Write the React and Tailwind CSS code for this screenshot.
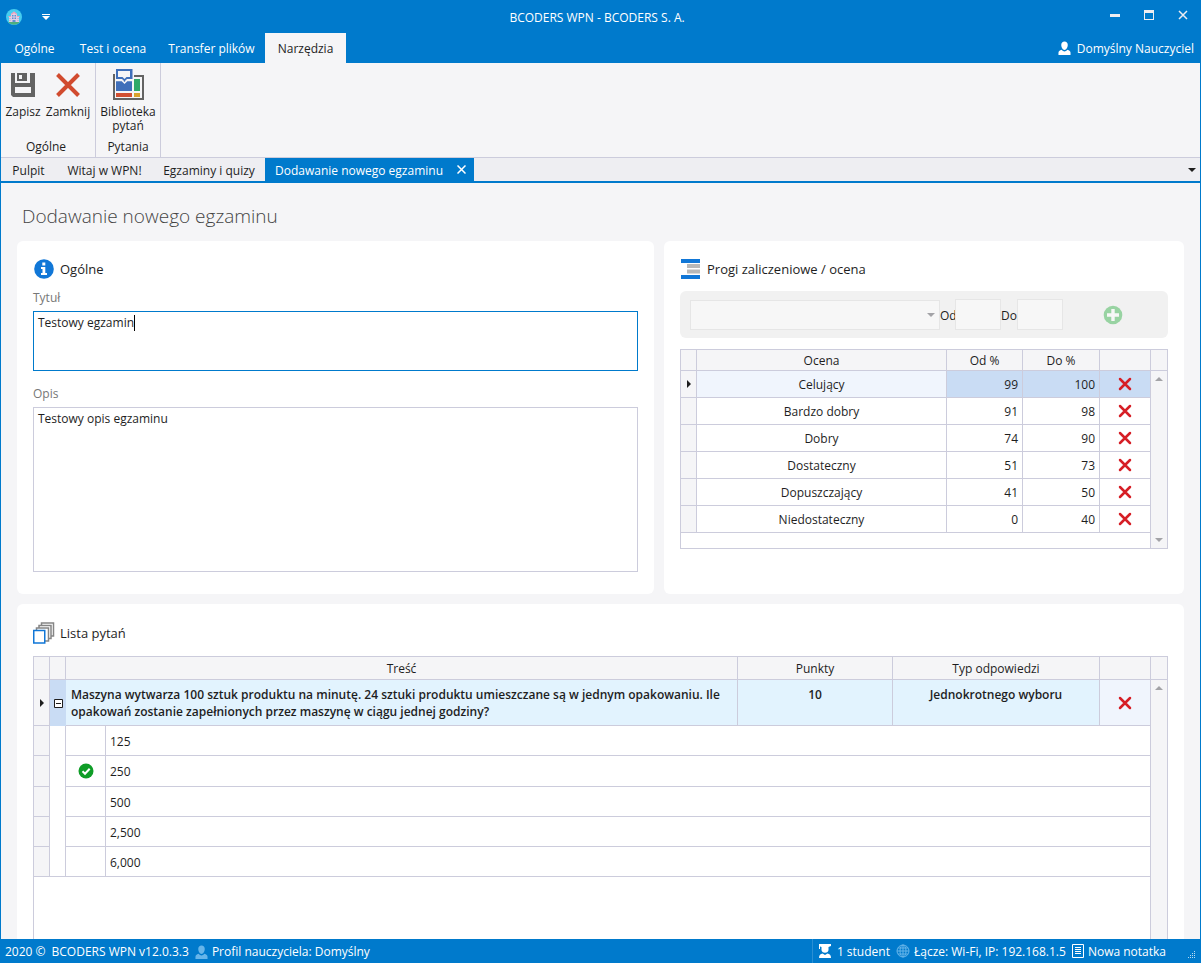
import React from "react";
import { useState } from "react";

const grades = [
  { name: "Celujący", from: 99, to: 100 },
  { name: "Bardzo dobry", from: 91, to: 98 },
  { name: "Dobry", from: 74, to: 90 },
  { name: "Dostateczny", from: 51, to: 73 },
  { name: "Dopuszczający", from: 41, to: 50 },
  { name: "Niedostateczny", from: 0, to: 40 },
];

const answers = [
  { text: "125", correct: false, height: "h-[30px]" },
  { text: "250", correct: true, height: "h-[31px]" },
  { text: "500", correct: false, height: "h-[30px]" },
  { text: "2,500", correct: false, height: "h-[30px]" },
  { text: "6,000", correct: false, height: "h-[30px]" },
];

function LogoIcon() {
  return (
    <svg width="16" height="16" viewBox="0 0 16 16">
      <circle cx="8" cy="8" r="8" fill="#45cdf0" />
      <path d="M2 13h12a8 8 0 0 1-12 0z" fill="#4fae7c" />
      <path d="M3 13V7.500h2V5l3-2.500L11 5v2.500h2V13z" fill="#dfcfe6" />
      <path d="M4.500 5.500L8 2.500l3.500 3h-1.500L8 4 6 5.500z" fill="#f29bb2" />
      <path d="M2.500 7h2.500v1H2.500zM11 7h2.500v1H11z" fill="#f29bb2" />
      <path d="M6 6h1.500v1.500H6zM8.500 6H10v1.500H8.500zM6 8.500h1.500V10H6zM8.500 8.500H10V10H8.500zM6.500 11h3v2h-3z" fill="#5f8fd0" />
      <path d="M3.500 9h1v1h-1zM11.500 9h1v1h-1zM3.500 11h1v1h-1zM11.500 11h1v1h-1z" fill="#9aa6cf" />
    </svg>
  );
}

function SaveIcon() {
  return (
    <svg width="32" height="32" viewBox="0 0 32 32">
      <path d="M4 4v22l2 2h22V4h-5v10H8V4z M8 18h16v6H8z" fill="#636363" fillRule="evenodd" />
      <path d="M10 4h10v8H10z M12 6v4h3V6z" fill="#636363" fillRule="evenodd" />
    </svg>
  );
}

function CloseIcon() {
  return (
    <svg width="32" height="32" viewBox="0 0 32 32">
      <path d="M5.500 5.500l21 21M26.500 5.500l-21 21" stroke="#d14b2f" strokeWidth="4" fill="none" />
    </svg>
  );
}

function LibraryIcon() {
  return (
    <svg width="32" height="32" viewBox="0 0 32 32">
      <path d="M3 6H2v24h29V7h-9" fill="none" stroke="#636363" strokeWidth="2" />
      <path d="M4 12h16v10H4z" fill="#3f6fba" />
      <path d="M4 24h16v4H4z" fill="#d14f32" />
      <path d="M22 10h6v12h-6z" fill="#2fa968" />
      <path d="M22 24h6v4h-6z" fill="#d9a22d" />
      <path d="M4 0h16.500v10H15l-2.500 2.500L10 10H4z" fill="#3f6fba" />
      <path d="M6 2h12v6h-3.500l-2 2-2-2H6z" fill="#f5f5f7" />
      <path d="M4 11.500h6l2.500 2.500 2.500-2.500h5" fill="none" stroke="#f5f5f7" strokeWidth="1.500" />
    </svg>
  );
}

function UserIcon({ color }) {
  return (
    <svg width="13" height="15" viewBox="0 0 14 15" fill={color}>
      <path d="M7 0c2.200 0 3.500 1.600 3.500 3.800C10.500 6.200 9 9 7 9S3.500 6.200 3.500 3.800C3.500 1.600 4.800 0 7 0z" />
      <path d="M4 8.800C4.800 10 6 10.600 7 10.600s2.200-.6 3-1.800c2.300.6 3.500 1.600 3.500 3.200v2.500H.5V12c0-1.600 1.200-2.600 3.500-3.200z" />
    </svg>
  );
}

function InfoIcon() {
  return (
    <svg width="20" height="20" viewBox="0 0 20 20">
      <circle cx="10" cy="10" r="9.800" fill="#1177d7" />
      <path d="M8.300 3.500h3v3h-3zM7 8h4.300v6H13v2H7v-2h1.500v-4H7z" fill="#fff" />
    </svg>
  );
}

function LinesIcon() {
  return (
    <svg width="20" height="22" viewBox="0 0 20 22">
      <path d="M0 1h19v4H0zM0 17h19v4H0z" fill="#1177d7" />
      <path d="M6 6h13v4H6zM6 11.500h13v4H6z" fill="#b8b8b8" />
    </svg>
  );
}

function StackIcon() {
  return (
    <svg width="22" height="22" viewBox="0 0 22 22" fill="#fff">
      <path d="M8.500 1h12v13h-12z" stroke="#858585" strokeWidth="1.500" />
      <path d="M6 3.500h12v13H6z" stroke="#858585" strokeWidth="1.500" />
      <path d="M3.500 6h12v13h-12z" stroke="#858585" strokeWidth="1.500" />
      <path d="M.75 8.500h11v12.500h-11z" stroke="#1177d7" strokeWidth="1.500" />
    </svg>
  );
}

function DeleteIcon() {
  return (
    <svg width="14" height="14" viewBox="0 0 14 14" className="block">
      <path d="M2 2l10 10M12 2L2 12" stroke="#d61f26" strokeWidth="2.500" strokeLinecap="round" />
    </svg>
  );
}

function DeleteButton({ label }) {
  return (
    <button type="button" aria-label={label} className="block mx-auto">
      <DeleteIcon />
    </button>
  );
}

function Arrow({ up }) {
  return (
    <svg width="8" height="4" viewBox="0 0 8 4" fill="#a3a3a7">
      <path d={up ? "M0 4l4-4 4 4z" : "M0 0l4 4 4-4z"} />
    </svg>
  );
}

function RowMarker() {
  return (
    <svg width="4" height="8" viewBox="0 0 4 8" className="block mx-auto" fill="#1e1e1e">
      <path d="M0 0l4 4-4 4z" />
    </svg>
  );
}

function TitleBar() {
  return (
    <header className="h-[33px] shrink-0 flex items-center bg-[#007acc] text-white">
      <div className="flex-1 flex items-center gap-[19px] pl-[5px]">
        <LogoIcon />
        <button type="button" aria-label="Dostosuj pasek">
          <svg width="10" height="6" viewBox="0 0 10 6" fill="#fff" className="block">
            <path d="M1 0h8v1H1zM1 2h8L5 6z" />
          </svg>
        </button>
      </div>
      <h1 className="pt-0.5">BCODERS WPN - BCODERS S. A.</h1>
      <div className="flex-1 flex items-center justify-end gap-6 pr-3 pb-1">
        <button type="button" aria-label="Minimalizuj">
          <svg width="10" height="10" viewBox="0 0 10 10" className="block">
            <path d="M0 4h10v3H0z" fill="#ededf1" />
          </svg>
        </button>
        <button type="button" aria-label="Maksymalizuj">
          <svg width="10" height="10" viewBox="0 0 10 10" className="block">
            <path d="M0 0h10v10H0zM1 3v6h8V3z" fill="#ededf1" fillRule="evenodd" />
          </svg>
        </button>
        <button type="button" aria-label="Zamknij okno">
          <svg width="10" height="10" viewBox="0 0 10 10" className="block">
            <path d="M1 1l8 8M9 1L1 9" stroke="#ededf1" strokeWidth="1.500" />
          </svg>
        </button>
      </div>
    </header>
  );
}

function MenuBar() {
  return (
    <nav className="h-[30px] shrink-0 flex bg-[#007acc] text-white">
      <button type="button" className="w-[67px] pt-0.5">Ogólne</button>
      <button type="button" className="w-[90px] pt-0.5">Test i ocena</button>
      <button type="button" className="w-[107px] pt-0.5">Transfer plików</button>
      <button type="button" className="w-[81px] pt-0.5 bg-[#f5f5f7] text-[#1e1e1e]">Narzędzia</button>
      <button type="button" className="ml-auto flex items-center gap-1.5 pr-1.5">
        <UserIcon color="#fff" />
        <span className="pt-0.5">Domyślny Nauczyciel</span>
      </button>
    </nav>
  );
}

function Ribbon() {
  return (
    <div className="h-[95px] shrink-0 flex border-b border-[#ccccdc] leading-[14px]">
      <div className="flex flex-col justify-between items-center w-[95px] pr-1 pt-1.5 pb-[3px] border-r border-[#ccccdc]">
        <div className="flex">
          <button type="button" className="w-11 flex flex-col items-center gap-1">
            <SaveIcon />
            Zapisz
          </button>
          <button type="button" className="w-[46px] flex flex-col items-center gap-1">
            <CloseIcon />
            Zamknij
          </button>
        </div>
        <span>Ogólne</span>
      </div>
      <div className="flex flex-col justify-between items-center w-[65px] pt-1.5 pb-[3px] border-r border-[#ccccdc]">
        <button type="button" className="flex flex-col items-center gap-1">
          <LibraryIcon />
          <span>Biblioteka<br />pytań</span>
        </button>
        <span>Pytania</span>
      </div>
    </div>
  );
}

function DocumentTabs() {
  return (
    <div className="h-[25px] shrink-0 flex items-stretch bg-[#eeeef2] border-b-2 border-[#007acc]">
      <button type="button" className="w-[55px] pt-0.5">Pulpit</button>
      <button type="button" className="w-[97px] pt-0.5">Witaj w WPN!</button>
      <button type="button" className="w-28 pt-0.5">Egzaminy i quizy</button>
      <div className="flex items-center justify-between w-[209px] pl-2.5 pr-2 bg-[#007acc] text-white">
        <button type="button" className="pt-0.5">Dodawanie nowego egzaminu</button>
        <button type="button" aria-label="Zamknij kartę">
          <svg width="9" height="9" viewBox="0 0 9 9" className="block">
            <path d="M.5 .5l8 8M8.500 .5l-8 8" stroke="#fff" strokeWidth="1.500" />
          </svg>
        </button>
      </div>
      <button type="button" aria-label="Lista kart" className="ml-auto pr-1">
        <svg width="8" height="4" viewBox="0 0 8 4" className="block" fill="#1e1e1e">
          <path d="M0 0h8L4 4z" />
        </svg>
      </button>
    </div>
  );
}

function GeneralCard() {
  const [title, setTitle] = useState("Testowy egzamin");
  const [description, setDescription] = useState("Testowy opis egzaminu");

  return (
    <section className="bg-white rounded-md px-4 pt-[18px] pb-[22px]">
      <h3 className="flex items-center gap-1.5 h-5 pl-px text-[13px]">
        <InfoIcon />
        <span className="pt-0.5">Ogólne</span>
      </h3>
      <label htmlFor="title" className="block mt-2.5 h-[22px] leading-[18px] text-[#777]">Tytuł</label>
      <div className="relative">
        <textarea
          id="title"
          value={title}
          onChange={(e) => setTitle(e.target.value)}
          className="block w-full h-[60px] px-1 py-[3px] leading-4 resize-none border border-[#007acc] outline-none"
        />
        <span className="absolute left-[101px] top-1 w-px h-4 bg-black" />
      </div>
      <label htmlFor="description" className="block mt-3.5 h-[22px] leading-[18px] text-[#777]">Opis</label>
      <textarea
        id="description"
        value={description}
        onChange={(e) => setDescription(e.target.value)}
        className="block w-full h-[165px] px-1 py-[3px] leading-4 resize-none border border-[#ccccdc] outline-none"
      />
    </section>
  );
}

function ScrollColumn({ headerClass, bottomArrow }) {
  return (
    <div className="w-[17px] shrink-0 flex flex-col items-center bg-[#f5f5f7] border-r border-[#ccccdc]">
      <div className={`w-full border-b border-[#ccccdc] ${headerClass}`} />
      <div className="flex-1 flex flex-col justify-between py-1.5">
        <Arrow up />
        {bottomArrow && <Arrow />}
      </div>
    </div>
  );
}

function GradesCard() {
  const cell = "border-r border-b border-[#ccccdc] font-normal p-0";
  const textCell = "border-r border-b border-[#ccccdc] font-normal px-1 pt-0.5 pb-0";

  return (
    <section className="bg-white rounded-md px-4 pt-[17px]">
      <h3 className="flex items-center gap-1.5 h-[22px] pl-px text-[13px]">
        <LinesIcon />
        <span className="pt-0.5">Progi zaliczeniowe / ocena</span>
      </h3>
      <div className="mt-[11px] h-[47px] px-2.5 flex items-center rounded-md bg-[#f1f1f1]">
        <div className="relative flex-1 max-w-[250px]">
          <select aria-label="Ocena" disabled className="block w-full h-[30px] appearance-none bg-[#f7f7f7] border border-[#e6e6e6]">
            <option></option>
          </select>
          <span className="absolute right-[5px] top-[13px] flex"><Arrow /></span>
        </div>
        <label htmlFor="from" className="w-[15px] pt-0.5 whitespace-nowrap">Od</label>
        <input id="from" disabled className="w-[46px] h-[31px] bg-[#f7f7f7] border border-[#e6e6e6]" />
        <label htmlFor="to" className="w-4 pt-0.5 whitespace-nowrap">Do</label>
        <input id="to" disabled className="w-[46px] h-[31px] bg-[#f7f7f7] border border-[#e6e6e6]" />
        <button type="button" disabled aria-label="Dodaj próg" className="ml-10">
          <svg width="20" height="20" viewBox="0 0 20 20" className="block">
            <circle cx="10" cy="10" r="9.300" fill="#98d3a2" />
            <path d="M8.300 4h3.400v4.300H16v3.400h-4.300V16H8.300v-4.300H4V8.300h4.300z" fill="#f7f7f7" />
          </svg>
        </button>
      </div>
      <div className="mt-[11px] flex border-l border-t border-b border-[#ccccdc]">
        <div className="flex-1 pb-[15px] border-r border-[#ccccdc]">
          <table className="w-full table-fixed border-separate border-spacing-0">
            <colgroup>
              <col className="w-4" />
              <col />
              <col className="w-[76px]" />
              <col className="w-[77px]" />
              <col className="w-[50px]" />
            </colgroup>
            <thead>
              <tr className="h-[21px] bg-[#f5f5f7]">
                <th className={cell}></th>
                <th className={textCell}>Ocena</th>
                <th className={textCell}>Od %</th>
                <th className={textCell}>Do %</th>
                <th className="border-b border-[#ccccdc] p-0"></th>
              </tr>
            </thead>
            <tbody>
              {grades.map((grade, i) => (
                <tr key={grade.name} className={`h-[27px] ${i === 0 ? "bg-[#c9dcf4]" : ""}`}>
                  <td className={`${cell} bg-[#f5f5f7]`}>{i === 0 && <RowMarker />}</td>
                  <td className={`${textCell} text-center ${i === 0 ? "bg-[#f0f5fd]" : ""}`}>{grade.name}</td>
                  <td className={`${textCell} text-right`}>{grade.from}</td>
                  <td className={`${textCell} text-right`}>{grade.to}</td>
                  <td className="border-b border-[#ccccdc] p-0"><DeleteButton label={`Usuń: ${grade.name}`} /></td>
                </tr>
              ))}
            </tbody>
          </table>
        </div>
        <ScrollColumn headerClass="h-[21px]" bottomArrow />
      </div>
    </section>
  );
}

function QuestionsCard() {
  const cell = "border-r border-b border-[#ccccdc] p-0";
  const headCell = "border-r border-b border-[#ccccdc] font-normal px-0 pt-0.5 pb-0";
  const last = answers.length - 1;

  return (
    <section className="flex-1 min-h-0 flex flex-col overflow-hidden bg-white rounded-t-md px-4 pt-[18px]">
      <h3 className="shrink-0 flex items-center gap-[5px] h-[22px] text-[13px]">
        <StackIcon />
        <span className="pt-0.5">Lista pytań</span>
      </h3>
      <div className="mt-3 flex-1 flex border-l border-t border-[#ccccdc]">
        <div className="flex-1 border-r border-[#ccccdc]">
          <table className="w-full table-fixed border-separate border-spacing-0">
            <colgroup>
              <col className="w-4" />
              <col className="w-4" />
              <col className="w-10" />
              <col />
              <col className="w-[155px]" />
              <col className="w-[207px]" />
              <col className="w-[50px]" />
            </colgroup>
            <thead>
              <tr className="h-[23px] bg-[#f5f5f7]">
                <th className={cell}></th>
                <th className={cell}></th>
                <th colSpan={2} className={headCell}>Treść</th>
                <th className={headCell}>Punkty</th>
                <th className={headCell}>Typ odpowiedzi</th>
                <th className="border-b border-[#ccccdc] p-0"></th>
              </tr>
            </thead>
            <tbody>
              <tr className="h-[46px] bg-[#e2f3fe] font-semibold leading-[17px]">
                <td className={`${cell} bg-[#f5f5f7]`}><RowMarker /></td>
                <td className="p-0 bg-[#c9dcf4]">
                  <button type="button" aria-label="Zwiń odpowiedzi" className="block mx-auto">
                    <svg width="9" height="9" viewBox="0 0 9 9" className="block">
                      <path d="M.5 .5h8v8h-8z" fill="#fff" stroke="#1e1e1e" />
                      <path d="M2 4h5v1H2z" fill="#1e1e1e" />
                    </svg>
                  </button>
                </td>
                <td colSpan={2} className="border-r border-b border-[#ccccdc] px-[5px] py-0">
                  Maszyna wytwarza 100 sztuk produktu na minutę. 24 sztuki produktu umieszczane są w jednym opakowaniu. Ile opakowań zostanie zapełnionych przez maszynę w ciągu jednej godziny?
                </td>
                <td className="border-r border-b border-[#ccccdc] px-0 pt-1.5 text-center align-top">10</td>
                <td className="border-r border-b border-[#ccccdc] px-0 pt-1.5 text-center align-top">Jednokrotnego wyboru</td>
                <td className="border-b border-[#ccccdc] p-0 bg-[#f0f5fd]"><DeleteButton label="Usuń pytanie" /></td>
              </tr>
              {answers.map((answer, i) => (
                <tr key={answer.text} className={answer.height}>
                  <td className={`${cell} bg-[#f5f5f7]`}></td>
                  <td className={i === last ? cell : "border-r border-[#ccccdc] p-0"}></td>
                  <td className={cell}>
                    {answer.correct && (
                      <svg width="16" height="16" viewBox="0 0 16 16" className="block mx-auto" role="img" aria-label="Poprawna">
                        <circle cx="8" cy="8" r="7.500" fill="#0f9d27" />
                        <path d="M4.500 8.200l2.500 2.500 4.700-5" fill="none" stroke="#fff" strokeWidth="2" />
                      </svg>
                    )}
                  </td>
                  <td colSpan={4} className="border-b border-[#ccccdc] px-1 pt-0.5 pb-0">{answer.text}</td>
                </tr>
              ))}
            </tbody>
          </table>
        </div>
        <ScrollColumn headerClass="h-[23px]" />
      </div>
    </section>
  );
}

function StatusBar() {
  return (
    <footer className="h-6 shrink-0 flex items-center justify-between bg-[#007acc] text-white px-1">
      <div className="flex items-center gap-1.5 pt-0.5">
        <span>2020 ©</span>
        <span>BCODERS WPN v12.0.3.3</span>
        <span className="flex items-center gap-1">
          <UserIcon color="#66b5ea" />
          Profil nauczyciela: Domyślny
        </span>
      </div>
      <div className="flex items-center gap-1.5 h-full">
        <span className="flex items-center gap-1.5 h-full pl-1.5 border-l border-[#2a8fd4]">
          <svg width="12" height="14" viewBox="0 0 12 14" fill="#fff">
            <path d="M0 0h12v2L9.500 3v3c0 1.500-1.500 2.700-3.500 2.700S2.500 7.500 2.500 6V3L1 2.500V5H0z" />
            <path d="M0 14c0-3 1.500-4 3.500-4.500L6 11l2.500-1.500C10.500 10 12 11 12 14z" />
          </svg>
          <span className="pt-0.5">1 student</span>
        </span>
        <span className="flex items-center gap-1">
          <svg width="14" height="14" viewBox="0 0 14 14" fill="none" stroke="#66b5ea">
            <circle cx="7" cy="7" r="6" />
            <ellipse cx="7" cy="7" rx="3" ry="6" />
            <path d="M7 1v12M1 7h12M2 4h10M2 10h10" />
          </svg>
          <span className="pt-0.5">Łącze: Wi-Fi, IP: 192.168.1.5</span>
        </span>
        <button type="button" className="flex items-center gap-1">
          <svg width="12" height="14" viewBox="0 0 12 14" fill="none" stroke="#fff">
            <path d="M.5 .5h11v13H.5zM3 3.500h6M3 5.500h6M3 7.500h6M3 9.500h6" />
          </svg>
          <span className="pt-0.5">Nowa notatka</span>
        </button>
        <svg width="8" height="8" viewBox="0 0 8 8" fill="#b9dcf3" className="self-end ml-4 mb-1">
          <path d="M6 0h1v1H6zM4 2h1v1H4zM6 2h1v1H6zM2 4h1v1H2zM4 4h1v1H4zM6 4h1v1H6zM0 6h1v1H0zM2 6h1v1H2zM4 6h1v1H4zM6 6h1v1H6z" />
        </svg>
      </div>
    </footer>
  );
}

export default function App() {
  return (
    <div className="h-screen flex flex-col overflow-hidden bg-[#f5f5f7] border-x border-[#007acc] text-[12px] text-[#1e1e1e] font-['Open_Sans','Noto_Sans',sans-serif]">
      <TitleBar />
      <MenuBar />
      <Ribbon />
      <DocumentTabs />
      <main className="flex-1 min-h-0 flex flex-col px-4 pt-[19px]">
        <h2 className="pl-[5px] h-[39px] text-[19px] leading-7 font-light text-[#444]">Dodawanie nowego egzaminu</h2>
        <div className="grid grid-cols-[637fr_520fr] gap-2.5 mb-2.5">
          <GeneralCard />
          <GradesCard />
        </div>
        <QuestionsCard />
      </main>
      <StatusBar />
    </div>
  );
}
